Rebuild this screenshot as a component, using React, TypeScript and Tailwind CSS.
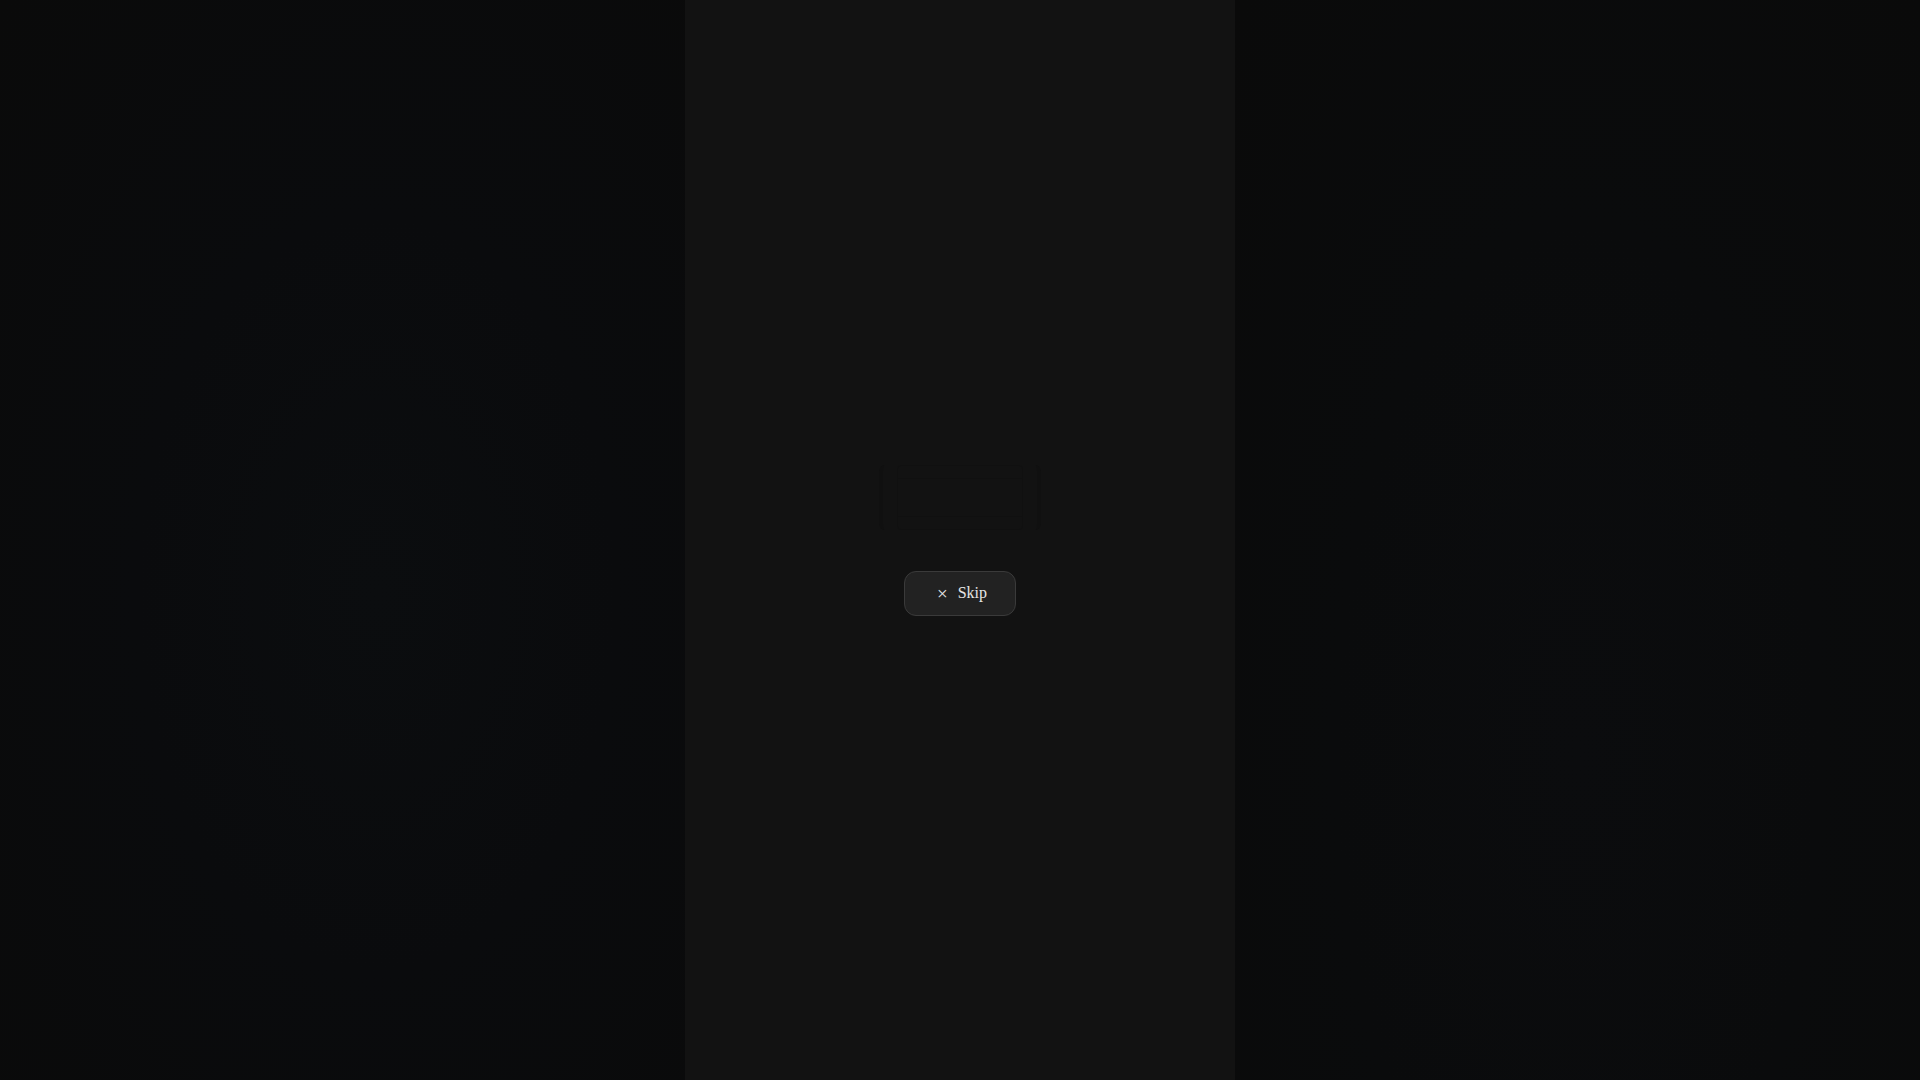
export default function App() {
  return (
    <div className="flex h-screen w-full overflow-hidden bg-[#0a0a0a] font-['Liberation_Serif',serif]">
      {/* left backdrop */}
      <div className="flex-1 bg-[#0a0b0d] bg-[radial-gradient(ellipse_at_55%_55%,#0b0d0f_0%,#0a0b0d_45%,#0a0a0a_100%)]" />

      {/* center column */}
      <div className="flex w-[550px] flex-col items-center justify-center gap-10 bg-[#121212]">
        <div className="flex h-[65px] w-[162px] items-center justify-center rounded-md border-x-4 border-[#101010]">
          <div className="flex h-full w-[126px] flex-col justify-between rounded-sm border border-[#101010] py-3">
            <div className="h-px w-full bg-[#101010]" />
            <div className="h-px w-full bg-[#101010]" />
          </div>
        </div>
        <button className="mt-px flex h-[45px] w-[112px] items-center justify-center gap-2.5 rounded-xl border border-[#3a3a3a] bg-[#222222] pl-1 text-base text-[#e6e6e6]">
          <span className="text-[19px] leading-none">×</span>
          <span>Skip</span>
        </button>
      </div>

      {/* right backdrop */}
      <div className="flex-1 bg-[#0a0a0a] bg-[radial-gradient(ellipse_at_50%_70%,#0b0c0e_0%,#0a0b0c_50%,#0a0a0a_100%)]" />
    </div>
  );
}
